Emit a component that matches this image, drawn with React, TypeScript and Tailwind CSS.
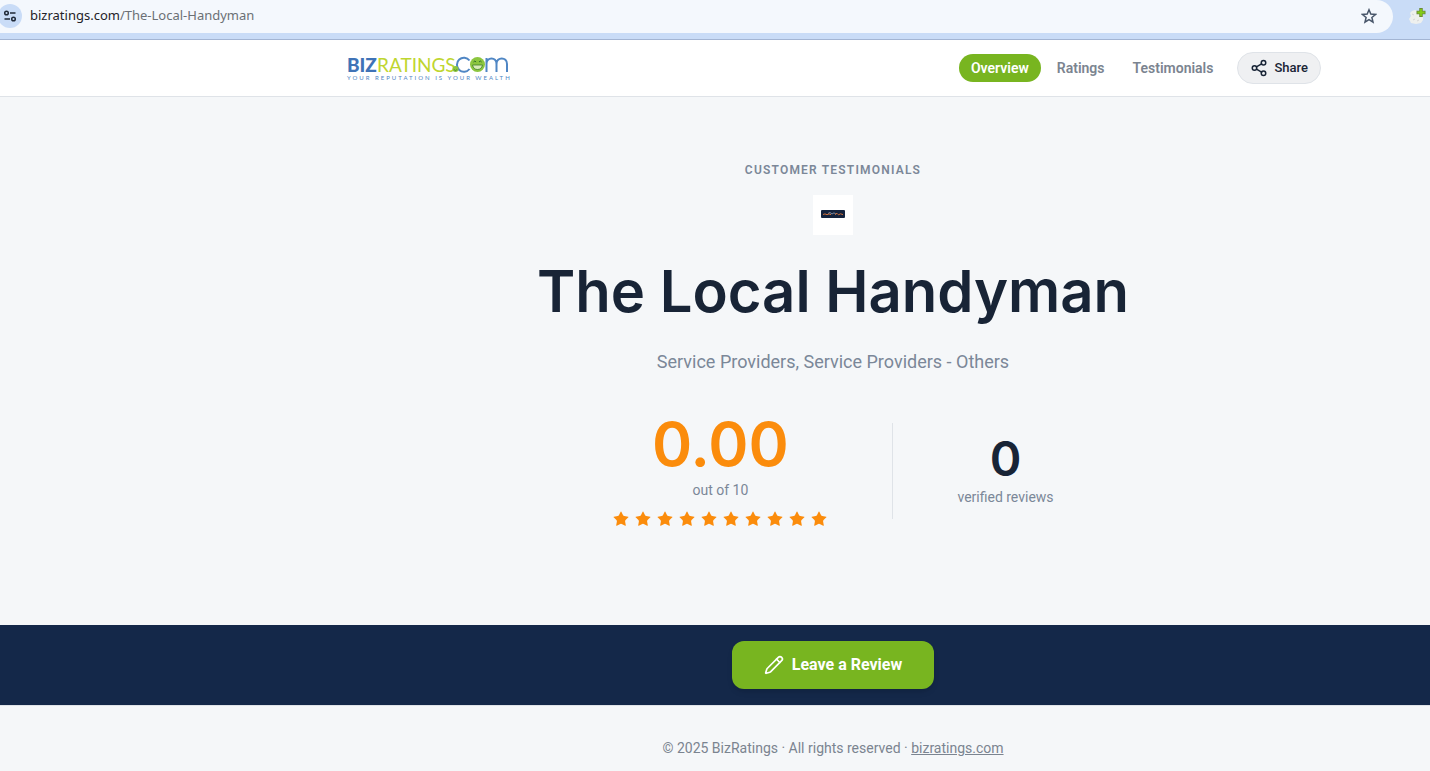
import { Pencil, Share2, Star } from 'lucide-react';

const navItems = [
  { label: 'Overview', href: '#overview', active: true },
  { label: 'Ratings', href: '#ratings', active: false },
  { label: 'Testimonials', href: '#testimonials', active: false },
];

function AddressBar() {
  return (
    <div className="h-10 flex items-start bg-[#c9dcf7] border-b border-[#a3b5d3] overflow-hidden">
      <div className="flex-1 h-8 box-content pb-px flex items-center bg-[#f4f8fd] rounded-r-full rounded-bl-2xl">
        <button aria-label="View site information" className="-ml-0.5 w-6 h-6 rounded-full bg-[#c9dcf7] flex items-center justify-center">
          <svg width="14" height="14" viewBox="0 0 14 14" fill="none" stroke="#1f2937" strokeWidth="1.5">
            <circle cx="3.5" cy="4" r="1.8" />
            <path d="M7 4h5.5M1.5 10H7" />
            <circle cx="10.5" cy="10" r="1.8" />
          </svg>
        </button>
        <p className="flex-1 ml-2 text-[13px] text-[#1f2328] font-['Noto_Sans',sans-serif]">
          bizratings.com<span className="text-[#6b7075]">/The-Local-Handyman</span>
        </p>
        <button aria-label="Bookmark this page" className="mr-4">
          <svg width="16" height="16" viewBox="0 0 16 16" fill="none" stroke="#475569" strokeWidth="1.5">
            <path d="M8 1.8l1.8 4.3 4.7.4-3.6 3 1.1 4.6L8 11.6l-4 2.5 1.1-4.6-3.6-3 4.7-.4z" />
          </svg>
        </button>
      </div>
      <button aria-label="Extension" className="ml-4 mr-1 mt-2">
        <svg width="17" height="17" viewBox="0 0 17 17">
          <path d="M3 3l3-1 5 2 3 3v5l-2 3-5 1-5-1-2-4 2-3-1-3z" fill="#eef0ee" />
          <path d="M3 6l2 1M4 12l2-1M8 13l2-1" stroke="#d5d5d5" />
          <path d="M12 0v9M7.5 4.5h9" stroke="#6b8a3a" strokeWidth="3.5" />
          <path d="M12 1v7M8.5 4.5h7" stroke="#84cc16" strokeWidth="1.8" />
        </svg>
      </button>
    </div>
  );
}

function Logo() {
  return (
    <svg width="166" height="40" viewBox="-2 -7 166 40" role="img" aria-label="BizRatings.com">
      <g fontFamily="Lato, sans-serif">
        <text x="0" y="17" fontSize="19" fontWeight="900" fill="#3f73b7">BIZ</text>
        <text x="30" y="17" fontSize="19" fill="#bfd630">RATINGS</text>
        <text x="0" y="25" fontSize="6" letterSpacing="2" fill="#4f86c4">YOUR REPUTATION IS YOUR WEALTH</text>
      </g>
      {/* .com lettering with the two smileys */}
      <path d="M122.500 5.500A7 7 0 1 0 122.500 14" fill="none" stroke="#4f86c4" strokeWidth="2" />
      <path d="M139.500 17V3M139.500 9C139.500 1.500 149.500 1.500 149.500 9V17M149.500 9C149.500 1.500 160 1.500 160 9V17" fill="none" stroke="#4f86c4" strokeWidth="2" />
      <circle cx="108.500" cy="14" r="3" fill="#8cc63f" />
      <path d="M106.800 14.500q1.700 2 3.400 0" fill="none" stroke="#3f7d2a" strokeWidth=".7" />
      <circle cx="130.500" cy="9.500" r="7.500" fill="#8cc63f" />
      <path d="M126.500 7q1.300-2 2.600 0M132 7q1.300-2 2.600 0" fill="none" stroke="#2f6b2a" />
      <path d="M125.500 10h10q-1 4.500-5 4.500t-5-4.500z" fill="#d9ecb8" stroke="#3f7d2a" strokeWidth=".8" />
    </svg>
  );
}

function Header() {
  return (
    <header className="bg-white border-b border-[#dfe3e8] pl-[236px]">
      <div className="max-w-5xl mx-auto px-6 h-14 flex items-center justify-between">
        <a href="#overview" className="block">
          <Logo />
        </a>
        <div className="flex items-center gap-3">
          <nav className="flex items-center gap-1">
            {navItems.map((item) => (
              <a
                key={item.label}
                href={item.href}
                className={`rounded-full px-3 py-1 text-sm font-semibold ${item.active ? 'bg-[#78b520] text-white' : 'text-[#7b8490]'}`}
              >
                {item.label}
              </a>
            ))}
          </nav>
          <button className="h-8 px-3 flex items-center gap-1.5 rounded-full border border-[#dfe3e8] bg-[#eff0f2] text-[13px] font-medium text-[#182436]">
            <Share2 size={18} />
            Share
          </button>
        </div>
      </div>
    </header>
  );
}

function BusinessMark() {
  return (
    <div className="mt-4 w-10 h-10 bg-white flex items-center justify-center">
      <svg width="24" height="10" viewBox="0 0 24 10" role="img" aria-label="The Local Handyman logo">
        <rect y="0" width="24" height="8" rx="1" fill="#14233d" />
        <path d="M7 3.500l2-1 2 1.500 2-1.200 2 1.500" fill="none" stroke="#7d8ba3" />
        <path d="M2 4.500l2-.6 2 .8 2-.8 2 .8M14 4.500l2-1.200 1.500 1.500 2-1 2.500.8" fill="none" stroke="#d0703a" />
      </svg>
    </div>
  );
}

function Hero() {
  return (
    <section id="overview" className="pl-[236px] pt-16 pb-[95px]">
      <div className="max-w-5xl mx-auto px-6 flex flex-col items-center text-center">
        <p className="text-xs leading-[18px] font-semibold tracking-widest uppercase text-[#7b8798]">Customer Testimonials</p>
        <BusinessMark />
        <h1 className="mt-6 text-[58px] leading-[65px] font-semibold text-[#182436] font-['Inter',sans-serif]">
          The Local Handyman
        </h1>
        <p className="mt-6 text-lg text-[#7b8798]">Service Providers, Service Providers - Others</p>

        <div id="ratings" className="mt-9 flex items-center gap-16">
          <div className="flex flex-col items-center">
            <p className="text-[61px] leading-[64px] font-semibold text-[#fb8c0c] font-['Inter',sans-serif]">0.00</p>
            <p className="mt-1 text-sm text-[#7b8798]">out of 10</p>
            <div className="mt-2 h-[22px] flex items-center gap-1" role="img" aria-label="Rating stars">
              {Array.from({ length: 10 }, (_, i) => (
                <Star key={i} size={18} fill="#fb8c0c" strokeWidth={0} />
              ))}
            </div>
          </div>
          <div className="w-px h-24 bg-[#dfe3e8]" />
          <div className="flex flex-col items-center">
            <p className="text-5xl leading-[48px] font-semibold text-[#182436] font-['Inter',sans-serif]">0</p>
            <p className="mt-1 text-sm text-[#7b8798]">verified reviews</p>
          </div>
        </div>
      </div>
    </section>
  );
}

export default function App() {
  return (
    <div className="min-h-screen bg-[#f5f7f9] font-['Roboto',sans-serif]">
      <AddressBar />
      <Header />
      <main>
        <Hero />
        <section className="bg-[#142849] pl-[236px] py-4 flex justify-center">
          <button className="h-12 px-8 flex items-center gap-2 rounded-xl bg-[#78b520] text-base font-bold text-white shadow-md">
            <Pencil size={20} strokeWidth={2} />
            Leave a Review
          </button>
        </section>
      </main>
      <footer className="border-t border-[#dfe3e8] pl-[236px] pt-8 pb-3 text-center text-sm text-[#7b8490]">
        © 2025 BizRatings · All rights reserved ·{' '}
        <a href="#bizratings" className="underline">bizratings.com</a>
      </footer>
    </div>
  );
}
